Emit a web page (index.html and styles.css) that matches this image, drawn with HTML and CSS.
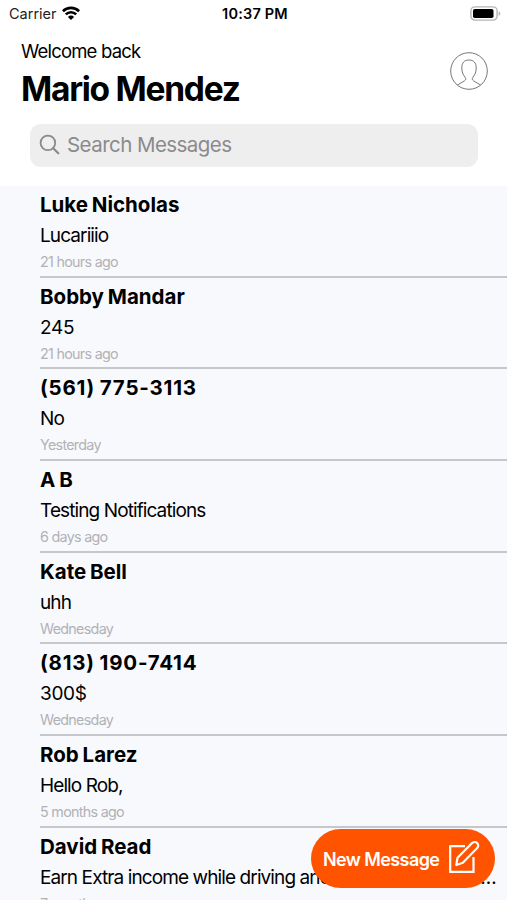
FILE: index.html
```html
<!DOCTYPE html>
<html lang="en">
<head>
    <meta charset="UTF-8">
    <meta name="viewport" content="width=device-width, initial-scale=1.0">
    <title>Messages</title>
    <link rel="stylesheet" href="styles.css">
</head>
<body>
    <div class="status-bar">
        <div class="carrier">
            <span>Carrier</span>
            <svg class="wifi" viewBox="0 0 18 14" width="18" height="14">
                <path d="M.9 5.2a11.6 11.6 0 0 1 16.2 0M3.8 8.4a7.4 7.4 0 0 1 10.4 0" fill="none" stroke="#000" stroke-width="2.6"/>
                <path d="M9 14L5.9 10.9a4.4 4.4 0 0 1 6.2 0z"/>
            </svg>
        </div>
        <div class="clock">10:37 PM</div>
        <svg class="battery" viewBox="0 0 31 15" width="31" height="15">
            <rect x="0.9" y="0.9" width="26.2" height="13.2" rx="4" fill="#fff" stroke="#b5b5b5" stroke-width="1.4"/>
            <rect x="3" y="2.9" width="20.5" height="9.2" rx="1.8"/>
            <path d="M28.6 5.2c2.3.8 2.3 3.8 0 4.6z" fill="#b5b5b5"/>
        </svg>
    </div>

    <header class="header">
        <div>
            <div class="welcome">Welcome back</div>
            <h1>Mario Mendez</h1>
        </div>
        <svg class="profile" viewBox="0 0 38 38" width="38" height="38">
            <g fill="none" stroke="#777" stroke-width="1">
                <circle cx="19" cy="19" r="18.3"/>
                <path d="M7.5 33l7-4.2c1.5-1 1.6-2.2.7-3.4c-2.2-2.7-3.4-5.4-3.4-9.4c0-5.3 2.5-8 7.2-8s7.2 2.7 7.2 8c0 4-1.2 6.7-3.4 9.4c-.9 1.200-.8 2.400.7 3.400L30.500 33"/>
            </g>
        </svg>
    </header>

    <div class="search">
        <svg viewBox="0 0 22 22" width="22" height="22">
            <g fill="none" stroke="#8a8a8d" stroke-width="1.8" stroke-linecap="round">
                <circle cx="8.9" cy="8.9" r="7.3"/>
                <path d="M14.2 14.2L19.3 19.3" stroke-width="2.2"/>
            </g>
        </svg>
        <span>Search Messages</span>
    </div>

    <main class="messages">
        <div class="message">
            <div class="name">Luke Nicholas</div>
            <div class="text">Lucariiio</div>
            <div class="time">21 hours ago</div>
        </div>
        <div class="message">
            <div class="name">Bobby Mandar</div>
            <div class="text number">245</div>
            <div class="time">21 hours ago</div>
        </div>
        <div class="message">
            <div class="name phone">(561) 775-3113</div>
            <div class="text">No</div>
            <div class="time">Yesterday</div>
        </div>
        <div class="message">
            <div class="name">A B</div>
            <div class="text">Testing Notifications</div>
            <div class="time">6 days ago</div>
        </div>
        <div class="message">
            <div class="name">Kate Bell</div>
            <div class="text">uhh</div>
            <div class="time">Wednesday</div>
        </div>
        <div class="message">
            <div class="name phone">(813) 190-7414</div>
            <div class="text number">300$</div>
            <div class="time">Wednesday</div>
        </div>
        <div class="message">
            <div class="name">Rob Larez</div>
            <div class="text">Hello Rob,</div>
            <div class="time">5 months ago</div>
        </div>
        <div class="message">
            <div class="name">David Read</div>
            <div class="text">Earn Extra income while driving and delivering food to customers</div>
            <div class="time">7 months ago</div>
        </div>
    </main>

    <button class="new-message" type="button">
        <span>New Message</span>
        <svg viewBox="0 0 32 34" width="32" height="34">
            <g fill="none" stroke="#fff" stroke-width="2.2">
                <path d="M17 6.2H2.2V31.8H25.5V17"/>
                <path d="M8.3 25l1.2-7.3L24 3.1a3.5 3.5 0 0 1 5.2 5L14.8 22.7z" stroke-linejoin="round"/>
            </g>
        </svg>
    </button>
</body>
</html>
```

FILE: styles.css
```css
body {
    font-family: 'Inter', sans-serif;
    background-color: #fff;
    color: #000;
    height: 900px;
    margin: 0;
    display: flex;
    flex-direction: column;
    overflow: hidden;
}

.status-bar {
    display: grid;
    grid-template-columns: 1fr auto 1fr;
    align-items: center;
    height: 27px;
    padding: 0 6px 0 9px;
    font-size: 14.5px;
}

.carrier {
    display: flex;
    align-items: center;
    gap: 5px;
    color: #222;
}

.wifi {
    margin-top: -2px;
}

.clock {
    font-weight: 600;
    letter-spacing: 0.2px;
}

.battery {
    justify-self: end;
}

.header {
    display: flex;
    justify-content: space-between;
    height: 97px;
    box-sizing: border-box;
    padding: 12px 19px 0 21px;
}

.welcome {
    font-size: 18.5px;
    line-height: 24px;
    letter-spacing: -0.8px;
}

h1 {
    margin: 6px 0 0;
    font-size: 33.5px;
    line-height: 40px;
    font-weight: 700;
    letter-spacing: -1.25px;
}

.profile {
    margin-top: 13px;
}

.search {
    display: flex;
    align-items: center;
    gap: 6px;
    height: 43px;
    box-sizing: border-box;
    margin: 0 29px 19px 30px;
    padding: 0 0 2px 9px;
    border-radius: 11px;
    background-color: #eee;
    color: #8a8a8d;
    font-size: 20.5px;
    letter-spacing: -0.55px;
}

.messages {
    flex: 1;
    min-height: 0;
    overflow: hidden;
    background-color: #f8f9fd;
    padding-left: 40px;
}

.message {
    height: 91.7px;
    box-sizing: border-box;
    padding-top: 6px;
    border-bottom: 2px solid #c6c7ca;
}

.name {
    font-size: 20.5px;
    line-height: 26px;
    font-weight: 700;
    letter-spacing: 0;
    word-spacing: -1px;
}

.phone {
    letter-spacing: 0.8px;
    word-spacing: -1px;
}

.text {
    margin-top: 6px;
    padding-right: 9px;
    font-size: 19px;
    line-height: 24px;
    letter-spacing: -0.9px;
    white-space: nowrap;
    overflow: hidden;
    text-overflow: ellipsis;
}

.number {
    letter-spacing: -0.3px;
}

.time {
    margin-top: 5px;
    font-size: 14.3px;
    line-height: 18px;
    letter-spacing: -0.7px;
    color: #b1b2b5;
}

.new-message {
    position: fixed;
    right: 12px;
    bottom: 12px;
    width: 184px;
    height: 59px;
    display: flex;
    align-items: center;
    justify-content: space-between;
    padding: 0 15px 4px 12px;
    border: none;
    border-radius: 30px;
    background-color: #ff5300;
    color: #fff;
    font-family: inherit;
    font-size: 18px;
    font-weight: 600;
    letter-spacing: -0.6px;
    white-space: nowrap;
}

.new-message span {
    padding-top: 5px;
}
```
